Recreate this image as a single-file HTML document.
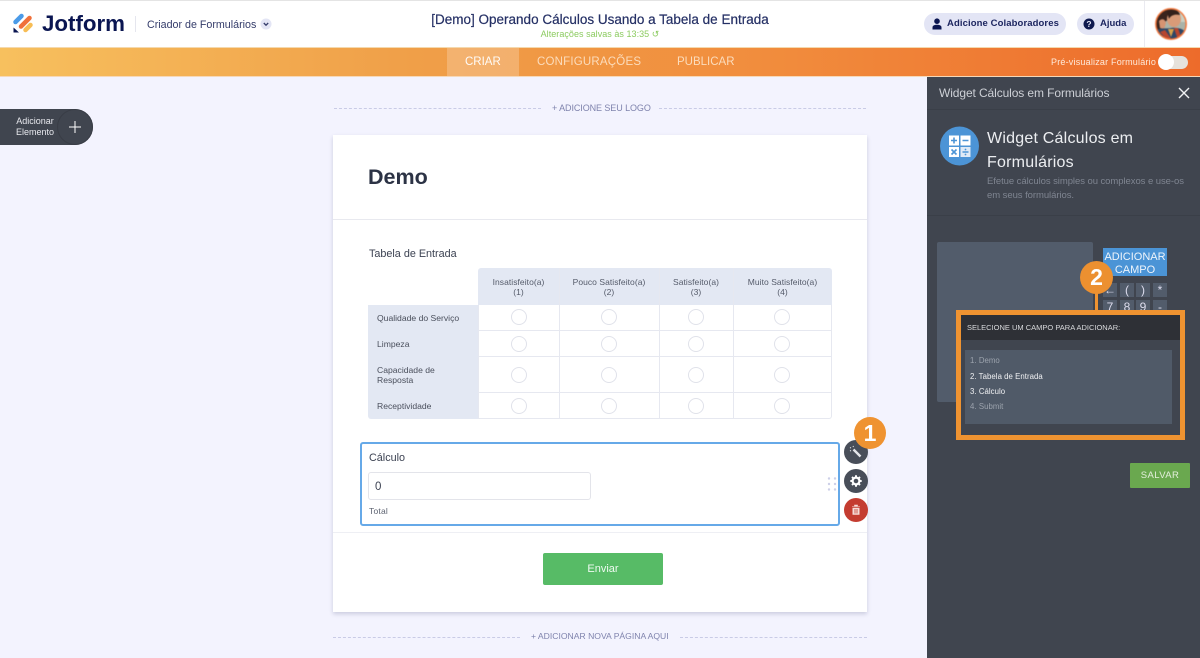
<!DOCTYPE html>
<html lang="pt"><head><meta charset="utf-8"><title>Jotform</title>
<style>
*{box-sizing:border-box}
html,body{margin:0;padding:0;background:#f3f3fe}
body{width:1200px;height:658px;position:relative;overflow:hidden;font-family:"Liberation Sans",sans-serif;color:#2c3345}
#w{position:absolute;left:0;top:0;width:1200px;height:658px;background:#f3f3fe;filter:blur(.3px)}
.a{position:absolute;white-space:nowrap}
.c{text-align:center}
.dash{position:absolute;height:0;border-top:1px dashed #c9cbe6}
.r{position:absolute;width:16px;height:16px;border:1px solid #e0e2ea;border-radius:50%;background:#fff}
.rh{position:absolute;left:377px;font-size:8.600px;color:#4a4f5c;line-height:10px}
.th{position:absolute;font-size:8.500px;letter-spacing:.05px;color:#555b6a;line-height:10px;text-align:center;white-space:nowrap}
.key{position:absolute;width:14px;height:14px;background:#525c6b;color:#dde;font-size:12px;line-height:14px;text-align:center}
.li{position:absolute;left:970px;font-size:7.800px;letter-spacing:.05px}
</style></head><body><div id="w">

<!-- header -->
<div class="a" style="left:0;top:0;width:1200px;height:48px;background:#fff;border-top:1px solid #e4e4e4;border-bottom:1px solid #f4d9ae"></div>
<svg class="a" style="left:12px;top:12px" width="22" height="22" viewBox="0 0 22 22">
<path d="M3.500 10 9.500 4" stroke="#4b9be8" stroke-width="4.500" stroke-linecap="round"/>
<path d="M9 14.500 17.500 6" stroke="#f0703a" stroke-width="4.500" stroke-linecap="round"/>
<path d="M13.500 18 18.500 13" stroke="#f7bd55" stroke-width="4.500" stroke-linecap="round"/>
<path d="M1.500 15.500V20.500H7z" fill="#0a1551"/>
</svg>
<div class="a" style="left:42px;top:9px;font-size:22.300px;line-height:29px;font-weight:700;color:#0a1551">Jotform</div>
<div class="a" style="left:135px;top:16px;width:1px;height:16px;background:#e5e6ee"></div>
<div class="a" style="left:147px;top:18px;font-size:10.700px;line-height:14px;color:#343c6a">Criador de Formulários</div>
<svg class="a" style="left:260px;top:18px" width="12" height="12" viewBox="0 0 12 12"><circle cx="6" cy="6" r="5.500" fill="#e3e5f5"/><path d="M3.800 5 6 7.200 8.200 5" fill="none" stroke="#343c6a" stroke-width="1.300"/></svg>
<div class="a c" style="left:400px;width:400px;top:11px;font-size:13.500px;line-height:17px;color:#253065;-webkit-text-stroke:.2px #253065">[Demo] Operando Cálculos Usando a Tabela de Entrada</div>
<div class="a c" style="left:400px;width:400px;top:28px;font-size:9px;line-height:12px;color:#8ccb60;letter-spacing:.04px">Alterações salvas às 13:35 ↺</div>

<div class="a" style="left:924px;top:13px;width:142px;height:22px;border-radius:11px;background:#e3e5f5"></div>
<svg class="a" style="left:931px;top:18px" width="12" height="12" viewBox="0 0 12 12"><circle cx="6" cy="3.200" r="2.800" fill="#0a1551"/><path d="M1.500 11.500V9.500C1.500 7.500 3.500 6.800 6 6.800S10.500 7.500 10.500 9.500V11.500Z" fill="#0a1551"/></svg>
<div class="a" style="left:947px;top:17px;font-size:9.500px;line-height:14px;color:#1d2660;letter-spacing:.1px;font-weight:700">Adicione Colaboradores</div>
<div class="a" style="left:1077px;top:13px;width:57px;height:22px;border-radius:11px;background:#e3e5f5"></div>
<svg class="a" style="left:1083px;top:18px" width="12" height="12" viewBox="0 0 12 12"><circle cx="6" cy="6" r="5.500" fill="#0f1a4f"/><text x="6" y="9" font-size="8.500" font-weight="700" text-anchor="middle" fill="#e3e5f5" font-family="Liberation Sans">?</text></svg>
<div class="a" style="left:1100px;top:17px;font-size:9.500px;line-height:14px;color:#1d2660;font-weight:700">Ajuda</div>
<div class="a" style="left:1144px;top:1px;width:1px;height:46px;background:#eaeaf0"></div>
<svg class="a" style="left:1154px;top:8px;filter:blur(.5px)" width="34" height="32" viewBox="0 0 34 32">
<defs><clipPath id="av"><circle cx="17" cy="16" r="15"/></clipPath></defs>
<g clip-path="url(#av)"><rect width="34" height="32" fill="#aab3a8"/>
<rect x="22" width="12" height="14" fill="#c9d0c4"/>
<path d="M2 0H20L18 8 11 14 8 24H0V0Z" fill="#3a241d"/>
<ellipse cx="20" cy="11" rx="7" ry="8" fill="#d99b78"/>
<path d="M13 4C17 0 25 1 26 7 21 6 17 7 15 11Z" fill="#33201a"/>
<path d="M5 13C8 10 11 11 12 15L10 21 6 20Z" fill="#d69472"/>
<path d="M0 32V23C6 19 12 21 17 20 24 19 30 21 34 26V32Z" fill="#2f4767"/>
<path d="M6 24 13 32H18L11 22ZM20 20 24 32H28L24 20Z" fill="#b8452f"/>
<path d="M14 21 17 29 20 21Z" fill="#d9a24a"/></g>
<circle cx="17" cy="16" r="15.200" fill="none" stroke="#f0773d" stroke-width="1.500"/>
</svg>

<!-- orange bar -->
<div class="a" style="left:0;top:48px;width:1200px;height:29px;background:linear-gradient(90deg,#f7c05e 0,#f0a049 33%,#f18b3c 66%,#ed6b2b 100%);border-bottom:1px solid #f6d8b8"></div>
<div class="a" style="left:447px;top:48px;width:72px;height:28px;background:rgba(255,255,255,.22)"></div>
<div class="a" style="left:465px;top:55px;font-size:11.500px;line-height:14px;color:#fff;opacity:.95">CRIAR</div>
<div class="a" style="left:537px;top:55px;font-size:11.500px;line-height:14px;color:#fbdcbc;letter-spacing:.2px">CONFIGURAÇÕES</div>
<div class="a" style="left:677px;top:55px;font-size:11.500px;line-height:14px;color:#fbdcbc">PUBLICAR</div>
<div class="a" style="left:1051px;top:56px;font-size:9px;line-height:12px;color:#feeadb;letter-spacing:.2px">Pré-visualizar Formulário</div>
<div class="a" style="left:1160px;top:56px;width:28px;height:13px;border-radius:7px;background:#e6e2dc"></div>
<div class="a" style="left:1158px;top:54px;width:16px;height:16px;border-radius:50%;background:#fff"></div>

<!-- add element -->
<div class="a" style="left:0;top:109px;width:93px;height:36px;background:#40454f;border-radius:0 18px 18px 0"></div>
<div class="a" style="left:57px;top:109px;width:36px;height:36px;border-radius:50%;border:1px solid #393d46"></div>
<div class="a c" style="left:5px;width:60px;top:116px;font-size:9px;line-height:11px;color:#e8e9ee">Adicionar<br>Elemento</div>
<svg class="a" style="left:69px;top:121px" width="12" height="12"><path d="M6 0V12M0 6H12" stroke="#fff" stroke-width="1"/></svg>

<!-- logo line -->
<div class="dash" style="left:334px;width:207px;top:108px"></div>
<div class="a" style="left:552px;top:103px;font-size:9px;line-height:11px;color:#7f83ad;letter-spacing:-.08px">+ ADICIONE SEU LOGO</div>
<div class="dash" style="left:659px;width:207px;top:108px"></div>

<!-- form card -->
<div class="a" style="left:333px;top:135px;width:534px;height:477px;background:#fff;box-shadow:0 2px 4px rgba(60,65,110,.22)"></div>
<div class="a" style="left:368px;top:163px;font-size:21.500px;line-height:28px;font-weight:700;color:#2c3345">Demo</div>
<div class="a" style="left:333px;top:219px;width:534px;height:1px;background:#e8e9ef"></div>
<div class="a" style="left:369px;top:247px;font-size:10.800px;line-height:14px;color:#3c4252">Tabela de Entrada</div>

<!-- table -->
<div class="a" style="left:478px;top:268px;width:354px;height:37px;background:#e3e8f3;border-radius:3px 3px 0 0"></div>
<div class="a" style="left:368px;top:305px;width:110px;height:114px;background:#e3e8f3;border-radius:0 0 0 3px"></div>
<div class="a" style="left:478px;top:305px;width:354px;height:114px;background:#fff;border:1px solid #e6e8f0;border-top:0;border-radius:0 0 3px 0"></div>
<div class="a" style="left:478px;top:330px;width:354px;height:1px;background:#e6e8f0"></div>
<div class="a" style="left:478px;top:356px;width:354px;height:1px;background:#e6e8f0"></div>
<div class="a" style="left:478px;top:392px;width:354px;height:1px;background:#e6e8f0"></div>
<div class="a" style="left:559px;top:268px;width:1px;height:151px;background:#e6e8f0"></div>
<div class="a" style="left:659px;top:268px;width:1px;height:151px;background:#e6e8f0"></div>
<div class="a" style="left:733px;top:268px;width:1px;height:151px;background:#e6e8f0"></div>

<div class="th" style="left:478px;width:81px;top:277px">Insatisfeito(a)<br>(1)</div>
<div class="th" style="left:559px;width:100px;top:277px">Pouco Satisfeito(a)<br>(2)</div>
<div class="th" style="left:659px;width:74px;top:277px">Satisfeito(a)<br>(3)</div>
<div class="th" style="left:733px;width:99px;top:277px">Muito Satisfeito(a)<br>(4)</div>

<div class="rh" style="top:313px">Qualidade do Serviço</div>
<div class="rh" style="top:339px">Limpeza</div>
<div class="rh" style="top:365px">Capacidade de<br>Resposta</div>
<div class="rh" style="top:401px">Receptividade</div>

<div class="r" style="left:511px;top:309px"></div><div class="r" style="left:601px;top:309px"></div><div class="r" style="left:688px;top:309px"></div><div class="r" style="left:774px;top:309px"></div>
<div class="r" style="left:511px;top:336px"></div><div class="r" style="left:601px;top:336px"></div><div class="r" style="left:688px;top:336px"></div><div class="r" style="left:774px;top:336px"></div>
<div class="r" style="left:511px;top:367px"></div><div class="r" style="left:601px;top:367px"></div><div class="r" style="left:688px;top:367px"></div><div class="r" style="left:774px;top:367px"></div>
<div class="r" style="left:511px;top:398px"></div><div class="r" style="left:601px;top:398px"></div><div class="r" style="left:688px;top:398px"></div><div class="r" style="left:774px;top:398px"></div>

<!-- calc -->
<div class="a" style="left:360px;top:442px;width:480px;height:84px;border:2px solid #66a9e8;border-radius:3px;background:#fff"></div>
<div class="a" style="left:369px;top:451px;font-size:10.800px;line-height:14px;color:#3c4252">Cálculo</div>
<div class="a" style="left:368px;top:472px;width:223px;height:28px;border:1px solid #e3e4ea;border-radius:3px;background:#fff"></div>
<div class="a" style="left:375px;top:480px;font-size:11.500px;line-height:14px;color:#3c4252">0</div>
<div class="a" style="left:369px;top:506px;font-size:8.500px;line-height:11px;color:#5c6270;letter-spacing:.2px">Total</div>
<svg class="a" style="left:827px;top:476px" width="10" height="16"><g fill="#cdd0e8"><circle cx="2" cy="2.500" r="1.200"/><circle cx="8" cy="2.500" r="1.200"/><circle cx="2" cy="8" r="1.200"/><circle cx="8" cy="8" r="1.200"/><circle cx="2" cy="13.500" r="1.200"/><circle cx="8" cy="13.500" r="1.200"/></g></svg>

<svg class="a" style="left:843px;top:440px" width="26" height="84" viewBox="0 0 26 84">
<circle cx="13" cy="12" r="12" fill="#484e59"/>
<path d="M10.500 9.500 17.500 16.500" stroke="#e4e6ea" stroke-width="2.400"/>
<path d="M7 7.500 8 8M10 6 10.500 7M7 11 8 10.500" stroke="#e4e6ea" stroke-width="1"/>
<circle cx="13" cy="41" r="12" fill="#484e59"/>
<circle cx="13" cy="41" r="3.400" fill="none" stroke="#fff" stroke-width="2.200"/>
<path d="M13 35.300V37M13 45V46.700M7.300 41H9M17 41H18.700M9 37 10.200 38.200M15.800 43.800 17 45M17 37 15.800 38.200M10.200 43.800 9 45" stroke="#fff" stroke-width="2"/>
<circle cx="13" cy="70" r="12" fill="#c43c30"/>
<path d="M9 66.500H17M11.500 66.500V65H14.500V66.500M9.800 68H16.200V74.500H9.800Z" fill="#f5dcd8" stroke="#f5dcd8" stroke-width=".6"/>
<path d="M12 69V73.500M14 69V73.500" stroke="#c43c30" stroke-width=".8"/>
</svg>
<div class="a c" style="left:854px;top:417px;width:32px;height:32px;border-radius:50%;background:#ef9331;color:#fff;font-size:23px;line-height:32px;font-weight:700">1</div>

<div class="a" style="left:333px;top:532px;width:534px;height:1px;background:#eeeff4"></div>
<div class="a c" style="left:543px;top:553px;width:120px;height:32px;background:#57bb66;border-radius:2px;color:#eefaf0;font-size:11px;line-height:32px">Enviar</div>

<div class="dash" style="left:333px;width:187px;top:637px"></div>
<div class="a" style="left:531px;top:631px;font-size:8.600px;line-height:11px;color:#7f83ad">+ ADICIONAR NOVA PÁGINA AQUI</div>
<div class="dash" style="left:680px;width:187px;top:637px"></div>

<!-- panel -->
<div class="a" style="left:927px;top:77px;width:273px;height:581px;background:#40454f"></div>
<div class="a" style="left:927px;top:109px;width:273px;height:1px;background:#3a3f48"></div>
<div class="a" style="left:939px;top:86px;font-size:12px;line-height:15px;color:#cdd0d6;letter-spacing:-.1px">Widget Cálculos em Formulários</div>
<svg class="a" style="left:1178px;top:87px" width="12" height="12"><path d="M1 1 11 11M11 1 1 11" stroke="#f1f2f4" stroke-width="1.400"/></svg>
<svg class="a" style="left:940px;top:126px" width="40" height="40" viewBox="0 0 40 40">
<circle cx="19.500" cy="20" r="19.500" fill="#4c94d6"/>
<rect x="9" y="9.500" width="10" height="10" fill="#fff"/><rect x="20.500" y="9.500" width="10" height="10" fill="#fff"/>
<rect x="9" y="21" width="10" height="10" fill="#fff"/><rect x="20.500" y="21" width="10" height="10" fill="#dfeaf6"/>
<path d="M11 14.500H17M14 11.500V17.500M22.500 14.500H28.500M11.500 23.500 16.500 28.500M16.500 23.500 11.500 28.500M22.500 26H28.500" stroke="#4c94d6" stroke-width="1.600"/>
<circle cx="25.500" cy="23.500" r=".9" fill="#4c94d6"/><circle cx="25.500" cy="28.500" r=".9" fill="#4c94d6"/>
</svg>
<div class="a" style="left:987px;top:127px;font-size:16px;line-height:24px;color:#eceef1;letter-spacing:.22px">Widget Cálculos em<br>Formulários</div>
<div class="a" style="left:987px;top:175px;font-size:9.500px;line-height:14px;color:#7f8591;letter-spacing:-.06px">Efetue cálculos simples ou complexos e use-os<br>em seus formulários.</div>
<div class="a" style="left:927px;top:215px;width:273px;height:1px;background:#3a3f48"></div>

<div class="a" style="left:937px;top:242px;width:156px;height:160px;background:#525c6b;border-radius:2px"></div>
<div class="a c" style="left:1103px;top:248px;width:64px;height:28px;background:#4b94d6;color:#eef4fb;font-size:11px;line-height:13px;padding-top:2.500px">ADICIONAR<br>CAMPO</div>
<div class="key" style="left:1103px;top:283px">←</div><div class="key" style="left:1120px;top:283px">(</div><div class="key" style="left:1136px;top:283px">)</div><div class="key" style="left:1153px;top:283px">*</div>
<div class="key" style="left:1103px;top:300px">7</div><div class="key" style="left:1120px;top:300px">8</div><div class="key" style="left:1136px;top:300px">9</div><div class="key" style="left:1153px;top:300px">-</div>
<div class="a" style="left:1095px;top:290px;width:3px;height:22px;background:#ef9331"></div>
<div class="a c" style="left:1080px;top:261px;width:33px;height:33px;border-radius:50%;background:#ec9030;color:#fff;font-size:23px;line-height:33px;font-weight:700">2</div>

<div class="a" style="left:956px;top:310px;width:229px;height:130px;background:#40454f;border:5px solid #ef9331"></div>
<div class="a" style="left:961px;top:315px;width:219px;height:25px;background:#2e3036"></div>
<div class="a" style="left:967px;top:323px;font-size:7.500px;line-height:10px;color:#d8d9dc">SELECIONE UM CAMPO PARA ADICIONAR:</div>
<div class="a" style="left:965px;top:350px;width:207px;height:74px;background:#505a68"></div>
<div class="li" style="top:355.500px;color:#9ca3ad">1. Demo</div>
<div class="li" style="top:371.500px;color:#f0f1f3">2. Tabela de Entrada</div>
<div class="li" style="top:386.500px;color:#f0f1f3">3. Cálculo</div>
<div class="li" style="top:401.500px;color:#9ca3ad">4. Submit</div>

<div class="a c" style="left:1130px;top:463px;width:60px;height:25px;background:#6aa84f;border-radius:1px;color:#e4efdc;font-size:9.500px;line-height:25px;letter-spacing:.4px">SALVAR</div>
</div></body></html>
